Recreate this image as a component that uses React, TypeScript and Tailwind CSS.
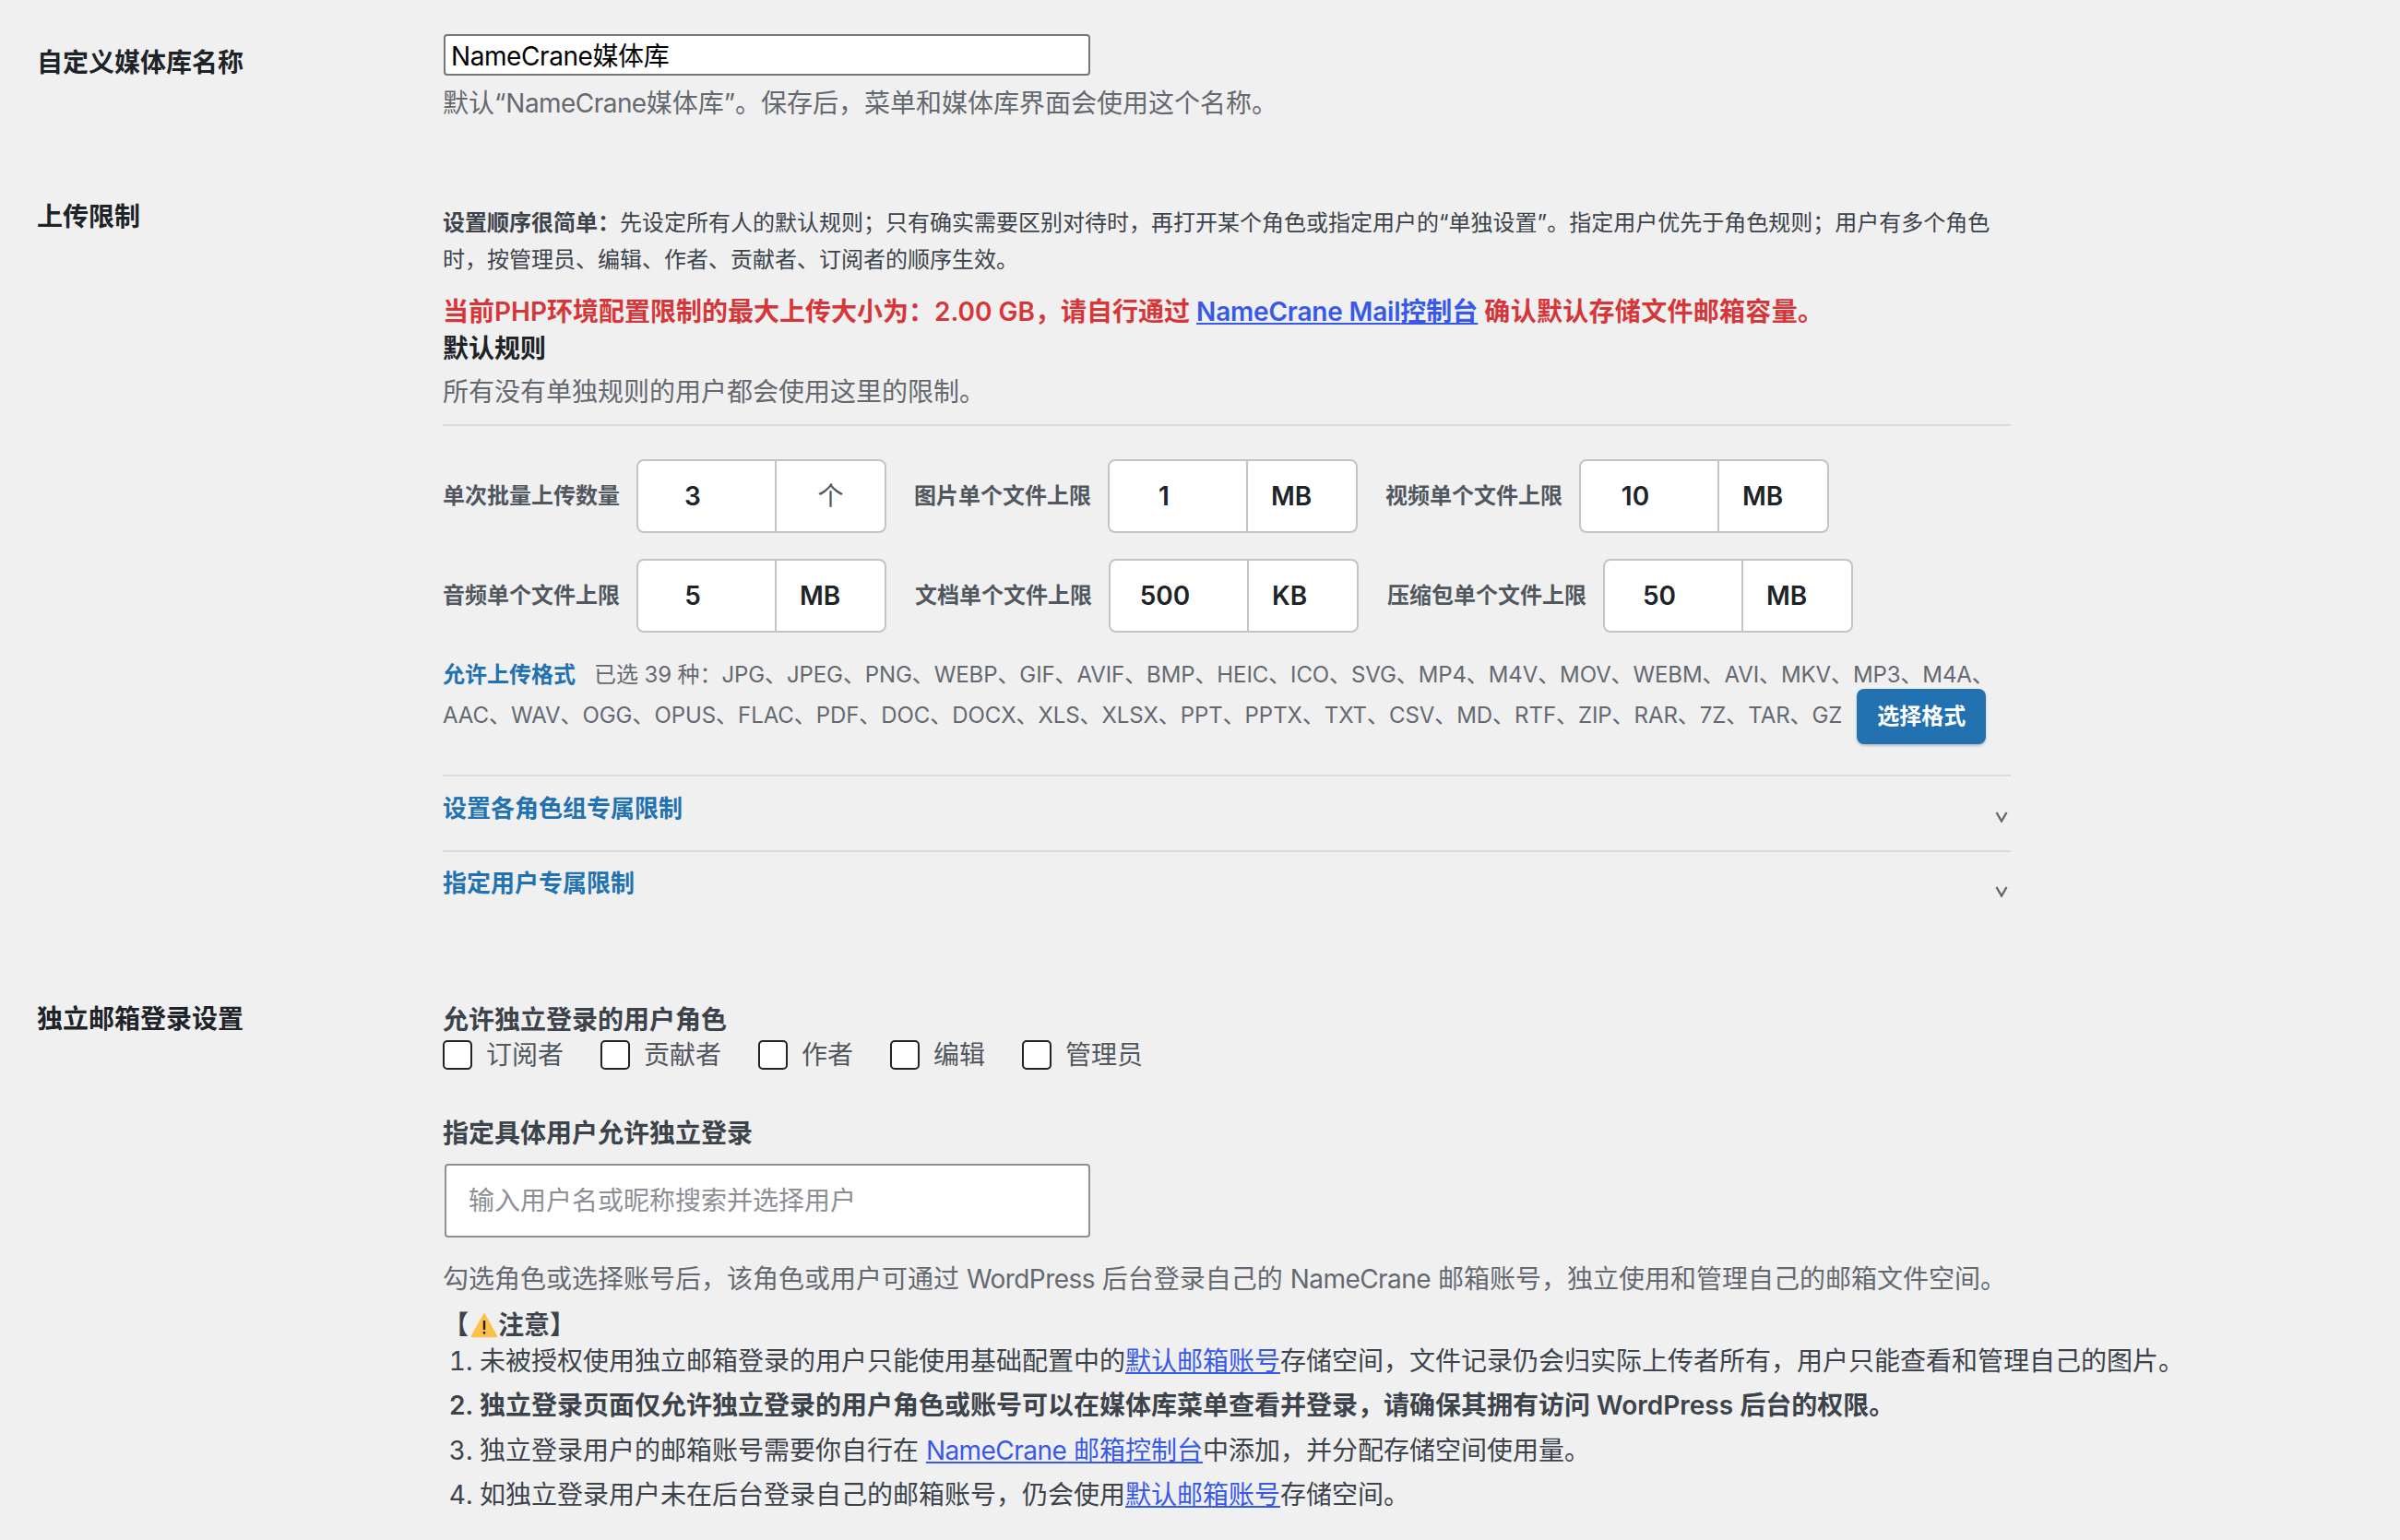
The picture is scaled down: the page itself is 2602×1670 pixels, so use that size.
import React from "react";

const font = "font-['Inter','Noto_Sans_CJK_SC',sans-serif]";

const LimitField = ({ label, value, unit, center }: { label: string; value: string; unit: string; center?: boolean }) => (
  <div className="flex items-center gap-[18px]">
    <span className="text-[24px] font-semibold text-[#50575e] whitespace-nowrap">{label}</span>
    <div className="flex h-[80px] w-[271px] rounded-[8px] border-2 border-[#c3c4c7] bg-white">
      <div className="flex w-[148px] items-center justify-center pr-[30px] text-[28px] font-semibold text-[#1d2327]">{value}</div>
      <div
        className={
          center
            ? "flex flex-1 items-center justify-center border-l-2 border-[#c3c4c7] text-[28px] font-normal text-[#50575e]"
            : "flex flex-1 items-center border-l-2 border-[#c3c4c7] pl-[25px] text-[28px] font-semibold text-[#1d2327]"
        }
      >
        {unit}
      </div>
    </div>
  </div>
);

const AccordionHead = ({ title }: { title: string }) => (
  <div className="flex justify-between">
    <span className="text-[26px] leading-[36px] font-semibold text-[#2271b1]">{title}</span>
    <svg width="14" height="12" viewBox="0 0 14 12" className="mt-[21px] mr-[3px]">
      <polyline points="1.5,1 7,10.5 12.5,1" fill="none" stroke="#646970" strokeWidth="2.4" />
    </svg>
  </div>
);

const RoleCheck = ({ label }: { label: string }) => (
  <label className="flex items-center gap-[15px]">
    <input type="checkbox" className="h-[32px] w-[32px] appearance-none rounded-[5px] border-2 border-[#1d2327] bg-white" />
    <span className="text-[28px] leading-[32px] text-[#50575e]">{label}</span>
  </label>
);

const Link = ({ children }: { children: React.ReactNode }) => (
  <a href="#" className="text-[#3858e9] underline">{children}</a>
);

const Latin = ({ children }: { children: React.ReactNode }) => (
  <span className="tracking-[-0.55px]">{children}</span>
);

export default function App() {
  return (
    <div className={`${font} h-[1670px] overflow-hidden bg-[#f0f0f1] text-[28px] leading-[40px] text-[#3c434a]`}>
      {/* 媒体库名称 */}
      <div className="flex pt-[37px]">
        <div className="w-[480px] shrink-0 pl-[40px] pt-[11px] font-semibold text-[#1d2327]">自定义媒体库名称</div>
        <div>
          <input
            type="text"
            defaultValue="NameCrane媒体库"
            className="ml-[1px] block h-[45px] w-[701px] rounded-[4px] border-2 border-[#767676] bg-white px-[6px] pb-[2px] text-[28px] tracking-[-0.42px] text-black outline-none"
          />
          <p className="mt-[10px] whitespace-nowrap text-[#646970]">
            默认“<Latin>NameCrane</Latin>媒体库”。保存后，菜单和媒体库界面会使用这个名称。
          </p>
        </div>
      </div>

      {/* 上传限制 */}
      <div className="mt-[82px] flex">
        <div className="w-[480px] shrink-0 pl-[40px] pt-[1px] font-semibold text-[#1d2327]">上传限制</div>
        <div className="w-[1700px] shrink-0">
          <p className="whitespace-nowrap pt-[8px] text-[24px] leading-[40px] text-[#3c434a]">
            <strong className="font-semibold">设置顺序很简单：</strong>先设定所有人的默认规则；只有确实需要区别对待时，再打开某个角色或指定用户的“单独设置”。指定用户优先于角色规则；用户有多个角色
            <br />
            时，按管理员、编辑、作者、贡献者、订阅者的顺序生效。
          </p>
          <p className="mt-[16px] whitespace-nowrap font-semibold text-[#d63638]">
            当前PHP环境配置限制的最大上传大小为：2.00 GB，请自行通过{" "}
            <Link><span className="tracking-[-0.2px]">NameCrane Mail</span>控制台</Link>{" "}
            <span className="tracking-[0.3px]">确认默认存储文件邮箱容量。</span>
          </p>
          <p className="font-semibold text-[#1d2327]">默认规则</p>
          <p className="mt-[7px] text-[#646970]">所有没有单独规则的用户都会使用这里的限制。</p>
          <div className="mt-[15px] h-[2px] bg-[#dcdcde]" />

          <div className="mt-[36px] flex gap-[30px]">
            <LimitField label="单次批量上传数量" value="3" unit="个" center />
            <LimitField label="图片单个文件上限" value="1" unit="MB" />
            <LimitField label="视频单个文件上限" value="10" unit="MB" />
          </div>
          <div className="mt-[28px] flex gap-[31px]">
            <LimitField label="音频单个文件上限" value="5" unit="MB" />
            <LimitField label="文档单个文件上限" value="500" unit="KB" />
            <LimitField label="压缩包单个文件上限" value="50" unit="MB" />
          </div>

          <div className="mt-[24px] whitespace-nowrap text-[24px] leading-[44px] text-[#646970]">
            <span className="mr-[20px] font-semibold text-[#2271b1]">允许上传格式</span>
            <span className="tracking-[-0.1px]">已选 39 种：JPG、JPEG、PNG、WEBP、GIF、AVIF、BMP、HEIC、ICO、SVG、MP4、M4V、MOV、WEBM、AVI、MKV、MP3、M4A、</span>
            <br />
            <span className="tracking-[-0.06px]">AAC、WAV、OGG、OPUS、FLAC、PDF、DOC、DOCX、XLS、XLSX、PPT、PPTX、TXT、CSV、MD、RTF、ZIP、RAR、7Z、TAR、GZ</span>
            <button className="-my-[10px] ml-[16px] inline-block h-[60px] w-[140px] rounded-[8px] bg-[#2271b1] align-middle text-[24px] leading-[60px] font-semibold text-white shadow-[0_2px_3px_rgba(0,0,0,0.2)]">
              选择格式
            </button>
          </div>

          <div className="mt-[42px] h-[2px] bg-[#dcdcde]" />
          <div className="pt-[17px] pb-[27px]">
            <AccordionHead title="设置各角色组专属限制" />
          </div>
          <div className="h-[2px] bg-[#dcdcde]" />
          <div className="pt-[16px]">
            <AccordionHead title="指定用户专属限制" />
          </div>
        </div>
      </div>

      {/* 独立邮箱登录 */}
      <div className="mt-[108px] flex">
        <div className="w-[480px] shrink-0 pl-[40px] pt-[1px] font-semibold text-[#1d2327]">独立邮箱登录设置</div>
        <div>
          <p className="pt-[2px] font-semibold text-[#3c434a]">允许独立登录的用户角色</p>
          <div className="mt-[2px] flex gap-[40px]">
            <RoleCheck label="订阅者" />
            <RoleCheck label="贡献者" />
            <RoleCheck label="作者" />
            <RoleCheck label="编辑" />
            <RoleCheck label="管理员" />
          </div>
          <p className="mt-[49px] font-semibold text-[#3c434a]">指定具体用户允许独立登录</p>
          <input
            type="text"
            placeholder="输入用户名或昵称搜索并选择用户"
            className="mt-[13px] ml-[2px] block h-[80px] w-[700px] rounded-[4px] border-2 border-[#8c8f94] bg-white px-[24px] text-[28px] outline-none placeholder:text-[#8c8f94]"
          />
          <p className="mt-[25px] whitespace-nowrap text-[#646970]">
            勾选角色或选择账号后，该角色或用户可通过 <Latin>WordPress</Latin> 后台登录自己的 <Latin>NameCrane</Latin> 邮箱账号，独立使用和管理自己的邮箱文件空间。
          </p>
          <p className="mt-[15px] flex items-center leading-[30px] font-semibold text-[#3c434a]">
            <span>【</span>
            <svg width="30" height="28" viewBox="0 0 30 28" className="ml-[2px]">
              <path d="M15 2.5 L28 26 L2 26 Z" fill="#fdc14a" stroke="#fdc14a" strokeWidth="2.5" strokeLinejoin="round" />
              <rect x="13.8" y="9" width="2.4" height="10" fill="#222" />
              <rect x="13.8" y="21" width="2.4" height="2.6" fill="#222" />
            </svg>
            <span>注意】</span>
          </p>
          <ol className="list-decimal whitespace-nowrap pl-[40px] leading-[48.3px] text-[#3c434a]">
            <li>未被授权使用独立邮箱登录的用户只能使用基础配置中的<Link>默认邮箱账号</Link>存储空间，文件记录仍会归实际上传者所有，用户只能查看和管理自己的图片。</li>
            <li className="font-semibold">独立登录页面仅允许独立登录的用户角色或账号可以在媒体库菜单查看并登录，请确保其拥有访问 WordPress 后台的权限。</li>
            <li>独立登录用户的邮箱账号需要你自行在 <Link><Latin>NameCrane</Latin> 邮箱控制台</Link>中添加，并分配存储空间使用量。</li>
            <li>如独立登录用户未在后台登录自己的邮箱账号，仍会使用<Link>默认邮箱账号</Link>存储空间。</li>
          </ol>
        </div>
      </div>
    </div>
  );
}
